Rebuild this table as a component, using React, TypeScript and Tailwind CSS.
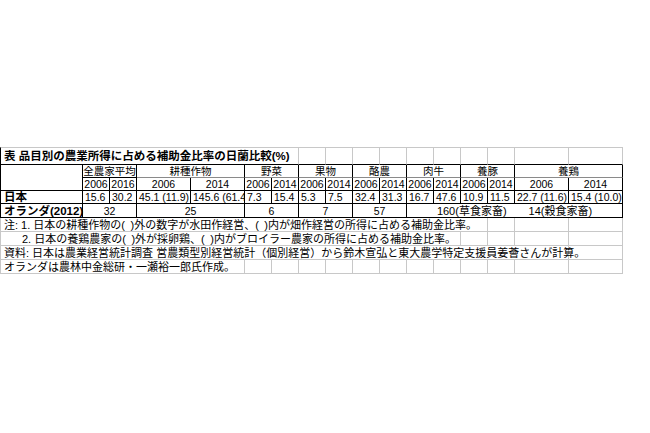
import React from 'react';

const SPAN: Record<number, string> = {
  1: 'col-span-1',
  2: 'col-span-2',
  5: 'col-span-5',
  6: 'col-span-6',
  7: 'col-span-7',
  13: 'col-span-13',
  14: 'col-span-14',
  16: 'col-span-16',
};

type CellProps = { span?: number; cls?: string; children?: React.ReactNode };

function Cell({ span = 1, cls = '', children }: CellProps) {
  return (
    <div className={`${SPAN[span]} flex items-center whitespace-nowrap border-r border-b leading-[12px] ${cls}`}>
      {children}
    </div>
  );
}

const TITLE_EMPTY = 'border-t border-t-[#c8c8c8] border-b-black border-r-[#c8c8c8]';
const GRP = 'justify-center text-[10.5px] border-r-black border-b-[#8a8a8a]';
const YR = 'justify-center text-[10.5px] border-r-black border-b-black';
const VAL = 'pl-[2px] text-[10.5px] border-r-black border-b-black overflow-hidden';
const LBL = 'border-l border-l-black border-r-black border-b-black pl-[3px] font-bold text-[11.5px]';
const NL = 'pl-[3px] text-[11px] border-l border-l-[#c8c8c8] border-r-[#c8c8c8] border-b-[#c8c8c8]';
const NE = 'border-r-[#c8c8c8] border-b-[#c8c8c8]';

const groups = ['全農家平均', '耕種作物', '野菜', '果物', '酪農', '肉牛', '養豚', '養鶏'];
const years = ['2006', '2016', '2006', '2014', '2006', '2014', '2006', '2014', '2006', '2014', '2006', '2014', '2006', '2014', '2006', '2014'];
const japan = ['15.6', '30.2', '45.1 (11.9)', '145.6 (61.4)', '7.3', '15.4', '5.3', '7.5', '32.4', '31.3', '16.7', '47.6', '10.9', '11.5', '22.7 (11.6)', '15.4 (10.0)'];

function Empties({ n }: { n: number }) {
  return (
    <>
      {Array.from({ length: n }).map((_, i) => (
        <Cell key={i} cls={NE} />
      ))}
    </>
  );
}

export default function App() {
  return (
    <div className="w-[650px] h-[433px] bg-white pt-[147px] overflow-hidden text-black font-['Liberation_Sans_Narrow','Liberation_Sans','Noto_Sans_CJK_JP',sans-serif]">
      <div className="grid w-[623px] grid-cols-[83px_27px_27px_54px_54px_repeat(10,27px)_54px_54px] grid-rows-[18px_13px_13px_13px_14px_14px_14px_14px_14px]">
        {/* title row */}
        <Cell span={7} cls="border-t border-t-[#c8c8c8] border-l border-l-black border-b-black border-r-[#c8c8c8] pl-[3px] font-bold text-[11.5px]">
          表 品目別の農業所得に占める補助金比率の日蘭比較(%)
        </Cell>
        {Array.from({ length: 10 }).map((_, i) => (
          <Cell key={`t${i}`} cls={TITLE_EMPTY} />
        ))}

        {/* header row 1 */}
        <Cell cls="row-span-2 border-l border-l-black border-r-black border-b-black" />
        {groups.map((g, i) => (
          <Cell key={`g${i}`} span={2} cls={i === 0 ? 'justify-center text-[10.5px] border-r-black border-b-black' : GRP}>
            {g}
          </Cell>
        ))}

        {/* header row 2 */}
        {years.map((y, i) => (
          <Cell key={`y${i}`} cls={YR}>
            {y}
          </Cell>
        ))}

        {/* Japan */}
        <Cell cls={LBL}>日本</Cell>
        {japan.map((v, i) => (
          <Cell key={`j${i}`} cls={VAL}>
            {v}
          </Cell>
        ))}

        {/* Netherlands */}
        <Cell cls={LBL}>オランダ(2012)</Cell>
        {['32', '25', '6', '7', '57'].map((v, i) => (
          <Cell key={`n${i}`} span={2} cls={YR}>
            {v}
          </Cell>
        ))}
        <Cell span={6} cls={`${YR} gap-[22px] text-[11px]`}>
          <span>160(草食家畜)</span>
          <span>14(穀食家畜)</span>
        </Cell>

        {/* notes */}
        <Cell span={14} cls={NL}>
          注: 1. 日本の耕種作物の(&#8194;)外の数字が水田作経営、(&#8194;)内が畑作経営の所得に占める補助金比率。
        </Cell>
        <Empties n={3} />

        <Cell span={13} cls={`${NL} pl-[21px]`}>
          2. 日本の養鶏農家の(&#8194;)外が採卵鶏、(&#8194;)内がブロイラー農家の所得に占める補助金比率。
        </Cell>
        <Empties n={4} />

        <Cell span={16} cls={NL}>
          資料: 日本は農業経営統計調査 営農類型別経営統計（個別経営）から鈴木宣弘と東大農学特定支援員姜薈さんが計算。
        </Cell>
        <Empties n={1} />

        <Cell span={5} cls={NL}>
          オランダは農林中金総研・一瀬裕一郎氏作成。
        </Cell>
        <Empties n={12} />
      </div>
    </div>
  );
}
